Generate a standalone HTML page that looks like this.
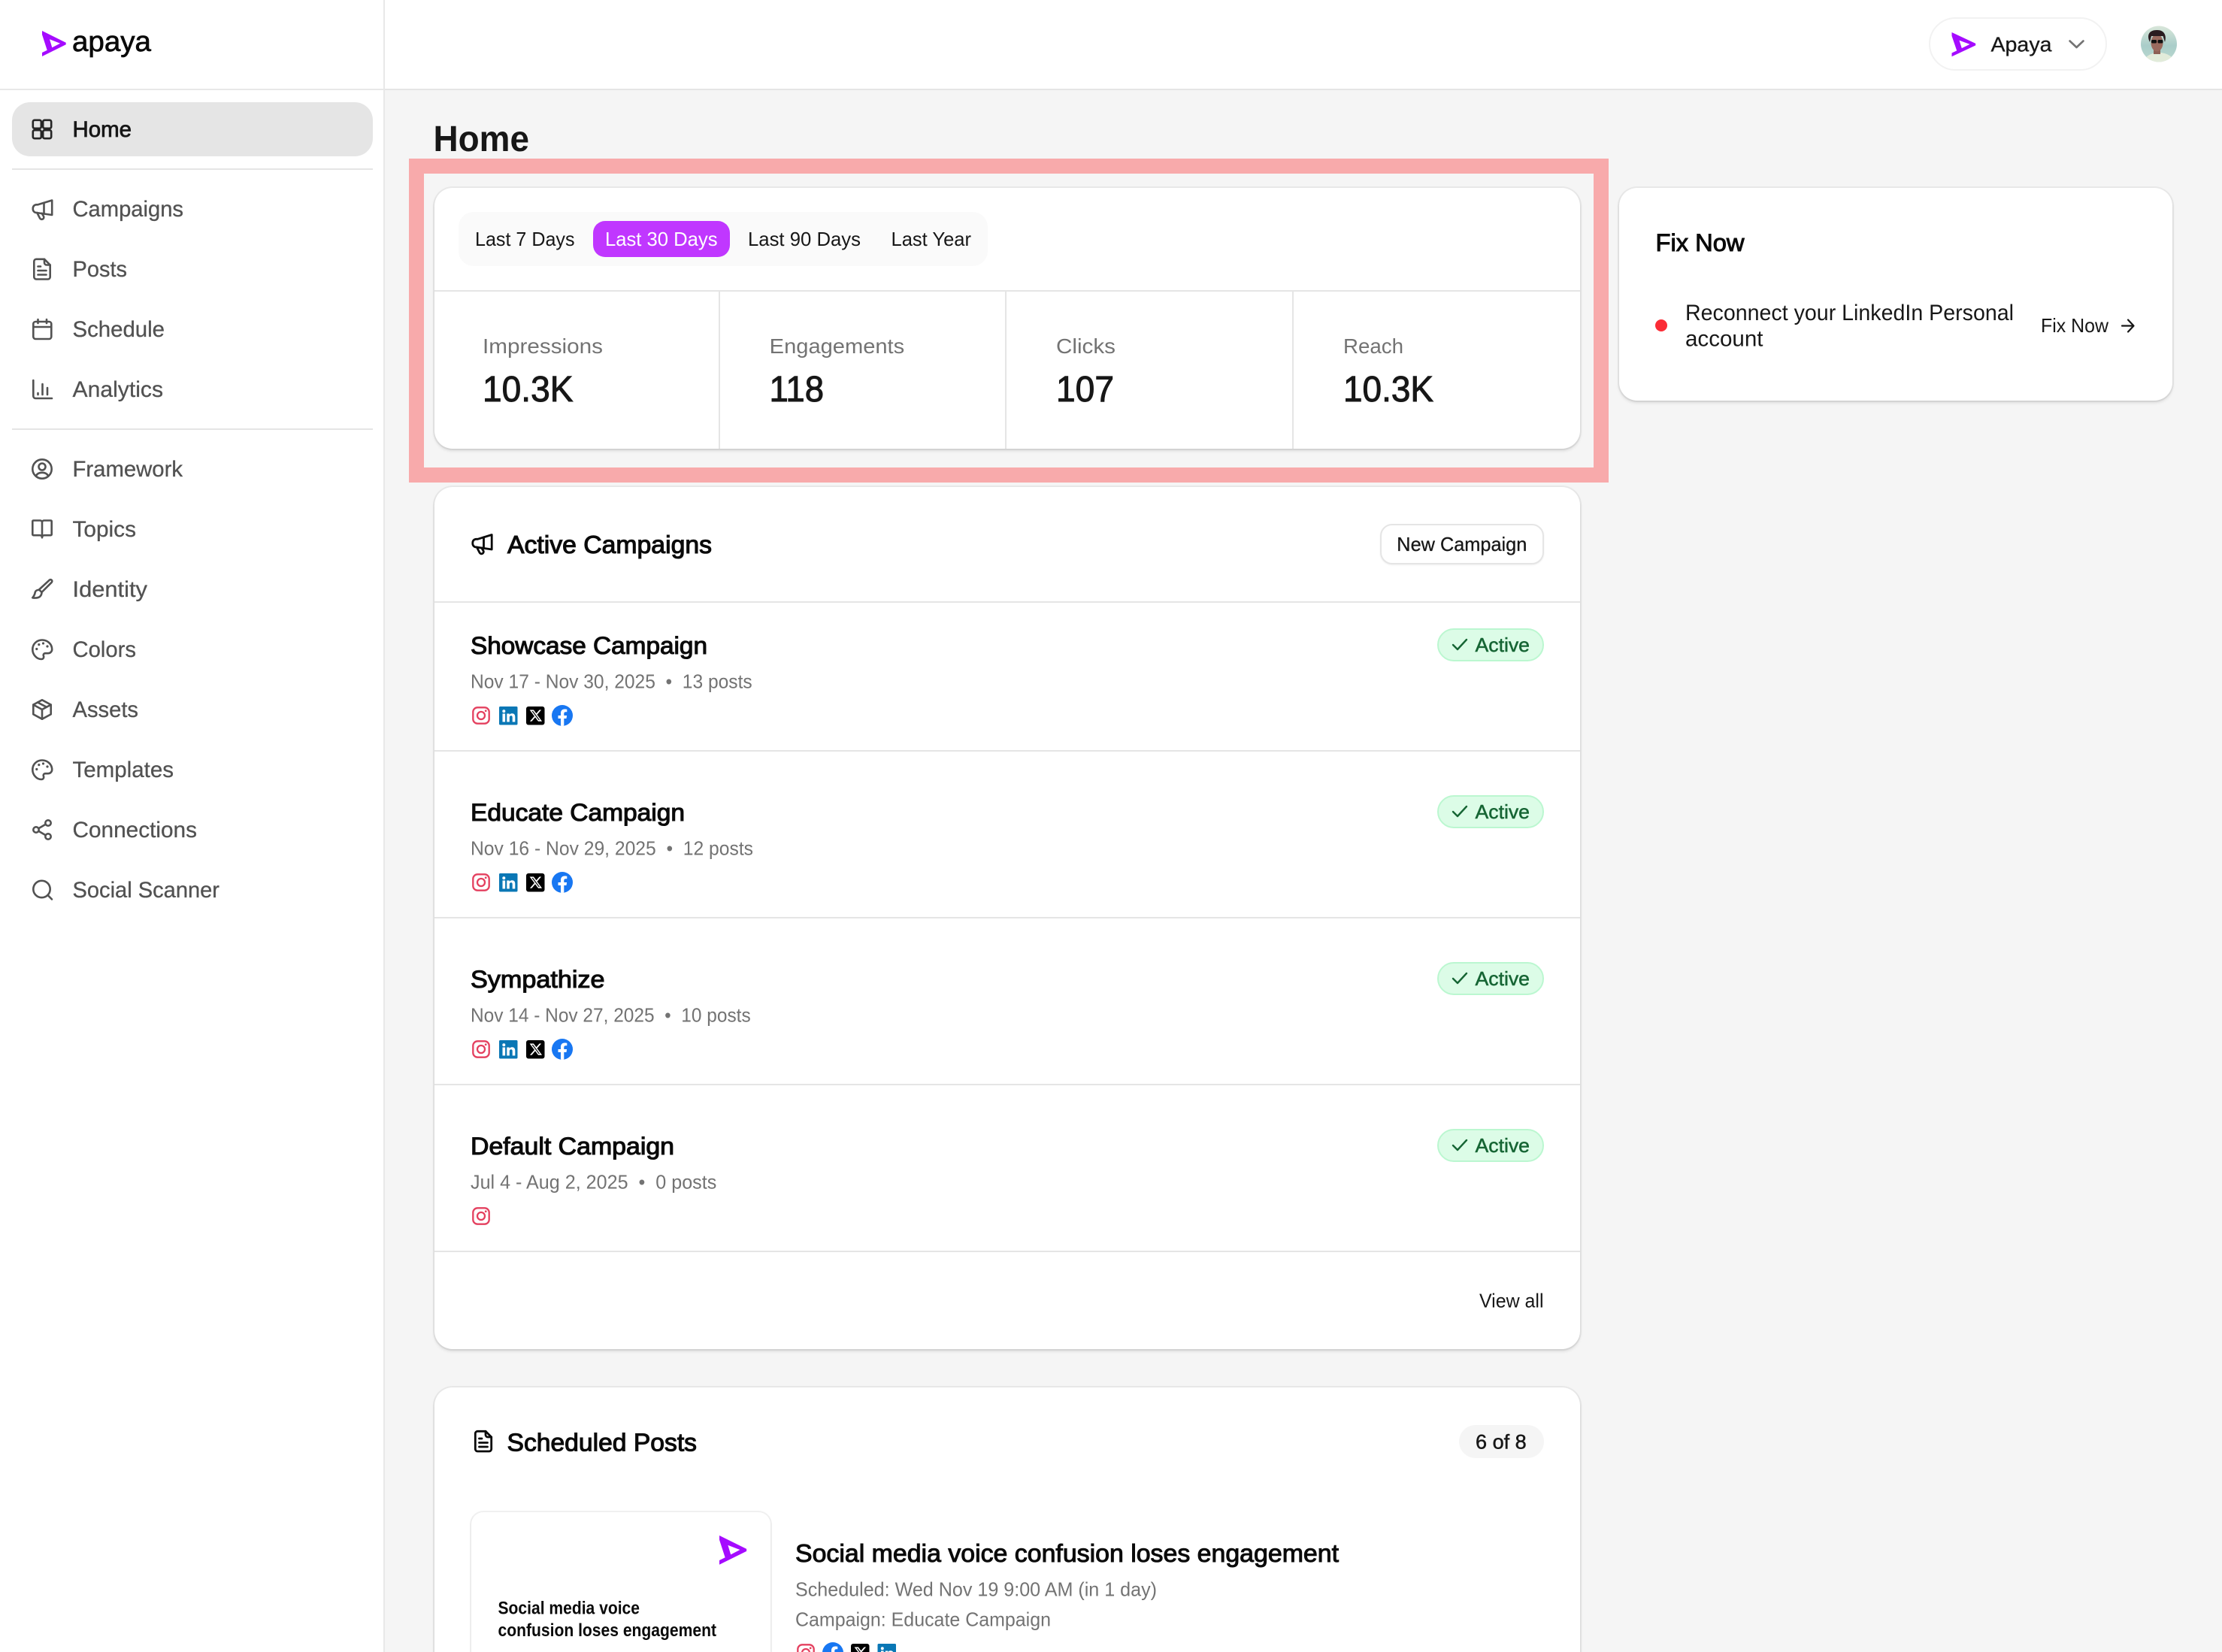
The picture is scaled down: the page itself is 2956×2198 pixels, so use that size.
<!DOCTYPE html>
<html lang="en">
<head>
<meta charset="utf-8">
<title>Apaya Home</title>
<style>
html,body{margin:0;padding:0;background:#f5f5f5;font-family:"Liberation Sans",sans-serif}
#page{position:relative;width:2956px;height:2198px;overflow:hidden;background:#f5f5f5}
.abs{position:absolute;box-sizing:border-box}
.card{position:absolute;background:#fff;border-radius:24px;box-shadow:0 0 0 2px rgba(0,0,0,.05),0 3px 4px rgba(0,0,0,.11)}
.hl{position:absolute;background:#e5e5e5}
svg.top{position:absolute;left:0;top:0}
text{font-family:"Liberation Sans",sans-serif;white-space:pre}
.m{stroke-width:.6px;paint-order:stroke}
.ic{fill:none;stroke:#525252;stroke-width:2.6;stroke-linecap:round;stroke-linejoin:round}
.k{stroke:#0a0a0a;stroke-width:2.8}
</style>
</head>
<body>
<div id="page">
<div class="abs" style="left:0;top:0;width:2956px;height:120px;background:#fff;border-bottom:2px solid #e5e5e5"></div>
<div class="abs" style="left:0;top:0;width:512px;height:2198px;background:#fff;border-right:2px solid #e8e8e8"></div>
<div class="abs" style="left:0;top:118px;width:510px;height:2px;background:#e8e8e8"></div>
<div class="abs" style="left:16px;top:136px;width:480px;height:72px;background:#e5e5e5;border-radius:24px"></div>
<div class="abs" style="left:16px;top:224px;width:480px;height:2px;background:#e5e5e5"></div>
<div class="abs" style="left:16px;top:570px;width:480px;height:2px;background:#e5e5e5"></div>

<div class="abs" style="left:2566px;top:23px;width:237px;height:71px;border:2px solid #f2f2f2;border-radius:36px;background:#fff"></div>

<div class="card" style="left:578px;top:250px;width:1524px;height:347px"></div>
<div class="abs" style="left:610px;top:282px;width:704px;height:72px;background:#fafafa;border-radius:20px"></div>
<div class="abs" style="left:789px;top:294px;width:182px;height:48px;background:#c037ff;border-radius:16px"></div>
<div class="hl" style="left:578px;top:386px;width:1524px;height:2px"></div>
<div class="hl" style="left:956px;top:388px;width:2px;height:209px"></div>
<div class="hl" style="left:1337px;top:388px;width:2px;height:209px"></div>
<div class="hl" style="left:1719px;top:388px;width:2px;height:209px"></div>

<div class="abs" style="left:544px;top:211px;width:1596px;height:431px;border:20px solid #f8aaab"></div>

<div class="card" style="left:2154px;top:250px;width:736px;height:283px"></div>

<div class="card" style="left:578px;top:648px;width:1524px;height:1147px"></div>
<div class="hl" style="left:578px;top:800px;width:1524px;height:2px"></div>
<div class="hl" style="left:578px;top:998px;width:1524px;height:2px"></div>
<div class="hl" style="left:578px;top:1220px;width:1524px;height:2px"></div>
<div class="hl" style="left:578px;top:1442px;width:1524px;height:2px"></div>
<div class="hl" style="left:578px;top:1664px;width:1524px;height:2px"></div>
<div class="abs" style="left:1836px;top:697px;width:218px;height:54px;background:#fff;border:2px solid #e5e5e5;border-radius:16px;box-shadow:0 1px 2px rgba(0,0,0,.06)"></div>
<div class="abs" style="left:1912px;top:836px;width:142px;height:44px;background:#dcfce7;border:2px solid #bbf7d0;border-radius:22px"></div>
<div class="abs" style="left:1912px;top:1058px;width:142px;height:44px;background:#dcfce7;border:2px solid #bbf7d0;border-radius:22px"></div>
<div class="abs" style="left:1912px;top:1280px;width:142px;height:44px;background:#dcfce7;border:2px solid #bbf7d0;border-radius:22px"></div>
<div class="abs" style="left:1912px;top:1502px;width:142px;height:44px;background:#dcfce7;border:2px solid #bbf7d0;border-radius:22px"></div>

<div class="card" style="left:578px;top:1846px;width:1524px;height:352px;border-radius:24px 24px 0 0"></div>
<div class="abs" style="left:1941px;top:1896px;width:113px;height:44px;background:#f5f5f5;border-radius:22px"></div>
<div class="abs" style="left:627px;top:2012px;width:398px;height:186px;background:#fff;border-radius:16px 16px 0 0;box-shadow:0 0 0 2px rgba(0,0,0,.05),0 1px 3px rgba(0,0,0,.08)"></div>

<svg class="top" width="2956" height="2198" viewBox="0 0 2956 2198" xmlns="http://www.w3.org/2000/svg">
<defs>
<path id="lg" fill-rule="evenodd" d="M0 0L31.7 15.7V18.3L0 34V29L6.7 25.7L0 5ZM10 11.3L13.3 22.3L24 16.7Z"/>
<g id="ig"><rect x="1.3" y="1.3" width="21.4" height="21.4" rx="6" fill="none" stroke="#e4405f" stroke-width="2.3"/><circle cx="12" cy="12" r="5" fill="none" stroke="#e4405f" stroke-width="2.3"/><circle cx="18.2" cy="5.8" r="1.4" fill="#e4405f"/></g>
<g id="li"><rect width="24.5" height="24.5" rx="1.5" fill="#0a77b5"/><circle cx="6.3" cy="6.3" r="2" fill="#fff"/><rect x="4.5" y="9.5" width="3.6" height="11" fill="#fff"/><path fill="#fff" d="M10.3 9.5h3.4V11c.6-1 1.9-1.8 3.5-1.8 3 0 4.1 1.9 4.1 4.8v6.5h-3.6v-5.8c0-1.5-.4-2.5-1.8-2.5-1.6 0-2.1 1.2-2.1 2.6v5.7h-3.5z"/></g>
<g id="xx"><rect width="24.5" height="24.5" rx="3" fill="#000"/><path fill="#fff" fill-rule="evenodd" d="M17.6 4.5h2.5l-5.6 6.4 6.6 8.8h-5.1l-4-5.3-4.6 5.3H4.9l6-6.8L4.6 4.5h5.3l3.6 4.8zm-.9 13.6h1.4L9 6H7.500z"/></g>
<g id="fb"><circle cx="14" cy="14" r="14" fill="#1877f2"/><path fill="#fff" d="M19.500 18l.6-4h-3.800v-2.600c0-1.100.5-2.200 2.300-2.200h1.700V5.800s-1.600-.3-3.100-.3c-3.100 0-5.200 1.900-5.200 5.300V14H8.500v4H12v9.800a14 14 0 0 0 4.300 0V18z"/></g>
<g id="mega"><path d="M26.700 1.500L8 7.300H6A4.700 4.700 0 0 0 1.300 12V13.300A4.700 4.700 0 0 0 6 18L26.700 21Z"/><path d="M6.800 18L10.500 25.300A2.800 2.800 0 0 0 15.600 23L13.200 18.900"/><path d="M16 4.800V19.500"/></g>
<g id="doc"><path d="M4.300 1.300H15L22.700 9V25A3 3 0 0 1 19.700 28H4.300A3 3 0 0 1 1.300 25V4.300A3 3 0 0 1 4.300 1.300Z"/><path d="M15 1.300V6A3 3 0 0 0 18 9H22.700"/><path d="M6.500 11H10M6.500 16.500H17.500M6.500 22H17.500"/></g>
<g id="pal"><path d="M14 1.500C6.800 1.500 1.300 7 1.300 14S6.800 27 13 27C15.200 27 16.200 25.600 16.200 24C16.200 23.100 15.700 22.500 15.700 21.600C15.700 20.200 16.900 19.200 18.300 19.200H21.700C24.900 19.200 27.200 16.800 27.200 14C27.200 7 21.200 1.500 14 1.500Z"/><g fill="#525252" stroke="none"><circle cx="6.800" cy="13.500" r="1.600"/><circle cx="9.800" cy="7.600" r="1.600"/><circle cx="15.500" cy="6" r="1.600"/><circle cx="21" cy="10" r="1.600"/></g></g>
<clipPath id="av"><circle cx="2872" cy="58.500" r="24"/></clipPath>
<linearGradient id="sky" x1="0" y1="0" x2="0" y2="1"><stop offset="0" stop-color="#dae7da"/><stop offset=".55" stop-color="#a9cdc9"/><stop offset="1" stop-color="#bcd9d0"/></linearGradient>
</defs>

<!-- logo -->
<use href="#lg" x="56" y="41" fill="#a50bff"/>
<text class="m" x="96" y="68" font-size="38" textLength="105" lengthAdjust="spacingAndGlyphs" fill="#0a0a0a" stroke="#0a0a0a" style="stroke-width:.7px">apaya</text>

<!-- sidebar icons -->
<g class="ic">
<g style="stroke:#262626"><rect x="43.800" y="159.800" width="11" height="11" rx="2.200"/><rect x="57.200" y="159.800" width="11" height="11" rx="2.200"/><rect x="43.800" y="173.200" width="11" height="11" rx="2.200"/><rect x="57.200" y="173.200" width="11" height="11" rx="2.200"/></g>
<use href="#mega" x="42.500" y="265"/>
<use href="#doc" x="44" y="343.500"/>
<g transform="translate(43,424)"><rect x="1.300" y="4" width="24" height="23" rx="3"/><path d="M1.300 11H25.300M7.500 1V6M19 1V6"/></g>
<g transform="translate(43,505)"><path d="M1.300 1V22A3 3 0 0 0 4.300 25H26"/><path d="M7.500 18V20M13.500 6V20M20 11V20"/></g>
<g transform="translate(42,610)"><circle cx="14" cy="14" r="12.700"/><circle cx="14" cy="11" r="4.500"/><path d="M6 23C7.500 20 10 18.800 14 18.800S20.500 20 22 23"/></g>
<g transform="translate(42,691)"><path d="M14 24V4A2.500 2.500 0 0 0 11.500 1.500H2.500A1.200 1.200 0 0 0 1.300 2.700V20A1.200 1.200 0 0 0 2.500 21.200H11A3 3 0 0 1 14 24.200A3 3 0 0 1 17 21.200H25.500A1.200 1.200 0 0 0 26.700 20V2.700A1.200 1.200 0 0 0 25.500 1.500H16.500A2.500 2.500 0 0 0 14 4"/></g>
<g transform="translate(42,770)"><path d="M26.700 1.800A2.200 2.200 0 0 0 23.700 1.800L10 14.500L13.500 18L26.700 4.800A2.200 2.200 0 0 0 26.700 1.800Z"/><path d="M10.500 15C7.500 14.500 5 16 4.500 19C4.200 21 3 23.200 1.300 25.300C4.800 25.800 9.300 25.600 11.600 23.300C13.400 21.300 13.600 18.800 13.300 18"/></g>
<use href="#pal" x="42" y="850"/>
<g transform="translate(43,930)"><path d="M13 1.300L24.700 7.600V20.400L13 26.700L1.300 20.400V7.600Z"/><path d="M1.300 7.600L13 14L24.700 7.600M13 14V26.700M7 4.500L19 10.800"/></g>
<use href="#pal" x="42" y="1010"/>
<g transform="translate(43,1090)"><circle cx="5" cy="14" r="3.700"/><circle cx="21" cy="5" r="3.700"/><circle cx="21" cy="23" r="3.700"/><path d="M8.300 12.300L17.700 6.700M8.300 15.700L17.700 21.300"/></g>
<g transform="translate(43,1171)"><circle cx="12.500" cy="12" r="11.200"/><path d="M21 20.500L26 25.500"/></g>
</g>

<!-- sidebar text -->
<text class="m" x="96.500" y="182" font-size="30" textLength="78.500" lengthAdjust="spacingAndGlyphs" fill="#171717" stroke="#171717" style="stroke-width:.8px">Home</text>
<g font-size="30" fill="#525252" stroke="#525252" class="m" style="stroke-width:.3px">
<text x="96.500" y="288" textLength="147.500" lengthAdjust="spacingAndGlyphs">Campaigns</text>
<text x="96.500" y="368" textLength="72.500" lengthAdjust="spacingAndGlyphs">Posts</text>
<text x="96.500" y="448" textLength="122.500" lengthAdjust="spacingAndGlyphs">Schedule</text>
<text x="96.500" y="528" textLength="120.500" lengthAdjust="spacingAndGlyphs">Analytics</text>
<text x="96.500" y="634" textLength="146.500" lengthAdjust="spacingAndGlyphs">Framework</text>
<text x="96.500" y="714" textLength="84.500" lengthAdjust="spacingAndGlyphs">Topics</text>
<text x="96.500" y="794" textLength="99.500" lengthAdjust="spacingAndGlyphs">Identity</text>
<text x="96.500" y="874" textLength="84.500" lengthAdjust="spacingAndGlyphs">Colors</text>
<text x="96.500" y="954" textLength="87.500" lengthAdjust="spacingAndGlyphs">Assets</text>
<text x="96.500" y="1034" textLength="134.500" lengthAdjust="spacingAndGlyphs">Templates</text>
<text x="96.500" y="1114" textLength="165.500" lengthAdjust="spacingAndGlyphs">Connections</text>
<text x="96.500" y="1194" textLength="195.500" lengthAdjust="spacingAndGlyphs">Social Scanner</text>
</g>

<!-- header right -->
<use href="#lg" x="2596.500" y="43" fill="#a50bff" transform="translate(2596.500,43) scale(1,.95) translate(-2596.500,-43)"/>
<text x="2648.500" y="68.500" font-size="28" textLength="81" lengthAdjust="spacingAndGlyphs" fill="#171717" stroke="#171717" class="m" style="stroke-width:.3px">Apaya</text>
<path d="M2753.500 54.500L2762.500 63L2771.500 54.500" fill="none" stroke="#737373" stroke-width="2.600" stroke-linecap="round" stroke-linejoin="round"/>
<g clip-path="url(#av)">
<rect x="2848" y="34" width="48" height="49" fill="url(#sky)"/>
<ellipse cx="2872" cy="85" rx="21" ry="15" fill="#e2ebda"/>
<rect x="2865" y="62" width="9" height="10" fill="#8d5f55"/>
<ellipse cx="2869.500" cy="57" rx="8" ry="11.500" fill="#9a6a5e"/>
<path d="M2860 56C2855 46 2860 40 2869 40C2878 39.500 2883 46 2880 56L2877.500 48L2862 48Z" fill="#2a1c20"/>
<rect x="2862" y="53" width="7" height="4.500" rx="1.500" fill="#111"/><rect x="2870.500" y="53" width="7" height="4.500" rx="1.500" fill="#111"/>
</g>

<!-- title -->
<text x="576.500" y="201" font-size="48" font-weight="700" textLength="127.500" lengthAdjust="spacingAndGlyphs" fill="#171717">Home</text>

<!-- tabs -->
<g font-size="26" fill="#171717">
<text x="632" y="327" textLength="132.500" lengthAdjust="spacingAndGlyphs">Last 7 Days</text>
<text x="805" y="327" textLength="149.500" lengthAdjust="spacingAndGlyphs" fill="#fff">Last 30 Days</text>
<text x="995" y="327" textLength="150" lengthAdjust="spacingAndGlyphs">Last 90 Days</text>
<text x="1185.500" y="327" textLength="106.500" lengthAdjust="spacingAndGlyphs">Last Year</text>
</g>

<!-- stats -->
<g font-size="28" fill="#737373">
<text x="642" y="470" textLength="160" lengthAdjust="spacingAndGlyphs">Impressions</text>
<text x="1023.700" y="470" textLength="179.500" lengthAdjust="spacingAndGlyphs">Engagements</text>
<text x="1405" y="470" textLength="79" lengthAdjust="spacingAndGlyphs">Clicks</text>
<text x="1787" y="470" textLength="80" lengthAdjust="spacingAndGlyphs">Reach</text>
</g>
<g font-size="48" fill="#171717" stroke="#171717" class="m" style="stroke-width:1px">
<text x="642" y="534" textLength="120.500" lengthAdjust="spacingAndGlyphs">10.3K</text>
<text x="1023.500" y="534" textLength="72.500" lengthAdjust="spacingAndGlyphs">118</text>
<text x="1405" y="534" textLength="77" lengthAdjust="spacingAndGlyphs">107</text>
<text x="1787" y="534" textLength="120" lengthAdjust="spacingAndGlyphs">10.3K</text>
</g>

<!-- fix now -->
<text class="m" x="2202.500" y="334" font-size="32" textLength="118" lengthAdjust="spacingAndGlyphs" fill="#0a0a0a" stroke="#0a0a0a" style="stroke-width:1px">Fix Now</text>
<circle cx="2210" cy="433" r="8" fill="#fb2c36"/>
<text x="2242" y="426" font-size="30" textLength="437" lengthAdjust="spacingAndGlyphs" fill="#171717">Reconnect your LinkedIn Personal</text>
<text x="2242" y="460.500" font-size="30" textLength="103.500" lengthAdjust="spacingAndGlyphs" fill="#171717">account</text>
<text x="2715" y="442" font-size="26" textLength="90" lengthAdjust="spacingAndGlyphs" fill="#171717">Fix Now</text>
<path d="M2823 433.500H2838M2831 425.500L2838.500 433.500L2831 441.500" fill="none" stroke="#171717" stroke-width="2.200" stroke-linecap="round" stroke-linejoin="round"/>

<!-- active campaigns -->
<g class="ic k"><use href="#mega" x="627.500" y="710"/></g>
<text class="m" x="675" y="736" font-size="33" textLength="272" lengthAdjust="spacingAndGlyphs" fill="#0a0a0a" stroke="#0a0a0a" style="stroke-width:1.100px">Active Campaigns</text>
<text class="m" x="1858.300" y="733" font-size="26" textLength="173" lengthAdjust="spacingAndGlyphs" fill="#171717" stroke="#171717" style="stroke-width:.3px">New Campaign</text>

<g class="m" font-size="32" fill="#0a0a0a" stroke="#0a0a0a" style="stroke-width:1.100px">
<text x="626" y="870" textLength="315" lengthAdjust="spacingAndGlyphs">Showcase Campaign</text>
<text x="626" y="1092" textLength="285" lengthAdjust="spacingAndGlyphs">Educate Campaign</text>
<text x="626" y="1314" textLength="178.500" lengthAdjust="spacingAndGlyphs">Sympathize</text>
<text x="626" y="1536" textLength="271" lengthAdjust="spacingAndGlyphs">Default Campaign</text>
</g>
<g font-size="26" fill="#737373">
<text x="626" y="915.500" textLength="374.700" lengthAdjust="spacingAndGlyphs">Nov 17 - Nov 30, 2025  •  13 posts</text>
<text x="626" y="1137.500" textLength="376" lengthAdjust="spacingAndGlyphs">Nov 16 - Nov 29, 2025  •  12 posts</text>
<text x="626" y="1359.500" textLength="372.700" lengthAdjust="spacingAndGlyphs">Nov 14 - Nov 27, 2025  •  10 posts</text>
<text x="626" y="1581.500" textLength="327.300" lengthAdjust="spacingAndGlyphs">Jul 4 - Aug 2, 2025  •  0 posts</text>
</g>
<use href="#ig" x="628" y="940"/><use href="#li" x="664" y="940"/><use href="#xx" x="700" y="940"/><use href="#fb" x="734" y="938"/>
<use href="#ig" x="628" y="1162"/><use href="#li" x="664" y="1162"/><use href="#xx" x="700" y="1162"/><use href="#fb" x="734" y="1160"/>
<use href="#ig" x="628" y="1384"/><use href="#li" x="664" y="1384"/><use href="#xx" x="700" y="1384"/><use href="#fb" x="734" y="1382"/>
<use href="#ig" x="628" y="1606"/>

<g fill="none" stroke="#166534" stroke-width="2.400" stroke-linecap="round" stroke-linejoin="round">
<path d="M1933 858L1939 864L1951 851"/><path d="M1933 1080L1939 1086L1951 1073"/><path d="M1933 1302L1939 1308L1951 1295"/><path d="M1933 1524L1939 1530L1951 1517"/>
</g>
<g class="m" font-size="26" fill="#166534" stroke="#166534" style="stroke-width:.5px">
<text x="1962.500" y="867" textLength="72.500" lengthAdjust="spacingAndGlyphs">Active</text>
<text x="1962.500" y="1089" textLength="72.500" lengthAdjust="spacingAndGlyphs">Active</text>
<text x="1962.500" y="1311" textLength="72.500" lengthAdjust="spacingAndGlyphs">Active</text>
<text x="1962.500" y="1533" textLength="72.500" lengthAdjust="spacingAndGlyphs">Active</text>
</g>
<text x="1968" y="1739.500" font-size="26" textLength="85.500" lengthAdjust="spacingAndGlyphs" fill="#171717">View all</text>

<!-- scheduled -->
<g class="ic k"><use href="#doc" x="631" y="1903"/></g>
<text class="m" x="674.500" y="1930.500" font-size="33" textLength="252.500" lengthAdjust="spacingAndGlyphs" fill="#0a0a0a" stroke="#0a0a0a" style="stroke-width:1.100px">Scheduled Posts</text>
<text class="m" x="1963" y="1927.500" font-size="27" textLength="67.700" lengthAdjust="spacingAndGlyphs" fill="#171717" stroke="#171717" style="stroke-width:.5px">6 of 8</text>

<use href="#lg" transform="translate(957,2043) scale(1.140)" fill="#a50bff"/>
<g font-size="24" font-weight="700" fill="#0a0a0a">
<text x="662.500" y="2147.500" textLength="188.500" lengthAdjust="spacingAndGlyphs">Social media voice</text>
<text x="662.500" y="2177" textLength="290.500" lengthAdjust="spacingAndGlyphs">confusion loses engagement</text>
</g>
<text class="m" x="1058" y="2078" font-size="33" textLength="723" lengthAdjust="spacingAndGlyphs" fill="#0a0a0a" stroke="#0a0a0a" style="stroke-width:1px">Social media voice confusion loses engagement</text>
<text x="1058" y="2123.500" font-size="26" textLength="481" lengthAdjust="spacingAndGlyphs" fill="#737373">Scheduled: Wed Nov 19 9:00 AM (in 1 day)</text>
<text x="1058" y="2163.500" font-size="26" textLength="340" lengthAdjust="spacingAndGlyphs" fill="#737373">Campaign: Educate Campaign</text>
<svg x="1055" y="2180" width="145" height="18" viewBox="1055 2180 145 18" overflow="hidden"><use href="#ig" x="1060" y="2187"/><use href="#fb" x="1094" y="2185"/><use href="#xx" x="1132" y="2187"/><use href="#li" x="1167.500" y="2187"/></svg>
</svg>
</div>
</body>
</html>
